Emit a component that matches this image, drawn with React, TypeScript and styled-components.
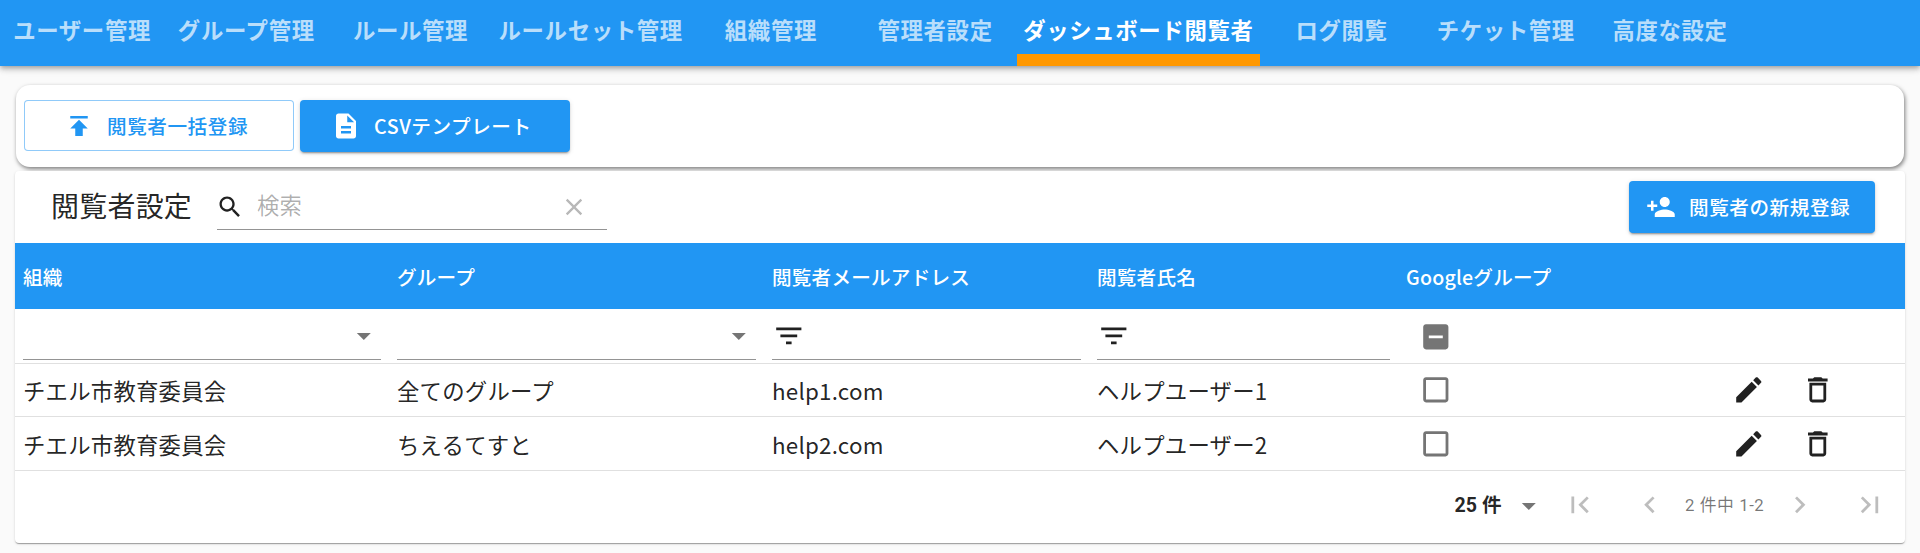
import React from "react";
import styled, { createGlobalStyle } from "styled-components";

const Global = createGlobalStyle`
  html, body { margin: 0; padding: 0; background: #fafafa; }
  body { font-family: "Noto Sans CJK JP", "Noto Sans", sans-serif; color: rgba(0,0,0,.87); width: 1920px; height: 553px; overflow: hidden; }
`;

const AppBar = styled.header`
  height: 66px; background: #2196f3; display: flex; align-items: stretch;
  box-shadow: 0 2px 4px -1px rgba(0,0,0,.2), 0 4px 5px 0 rgba(0,0,0,.14), 0 1px 10px 0 rgba(0,0,0,.12);
`;
const Tab = styled.div<{ $active?: boolean }>`
  min-width: 164.2px; height: 66px; box-sizing: border-box; flex: none; padding: 12px 6px 0;
  text-align: center; font-size: 22.4px; line-height: 34px; font-weight: 700; letter-spacing: .64px; white-space: nowrap;
  color: ${p => (p.$active ? "#fff" : "rgba(255,255,255,.7)")};
  border-bottom: 12px solid ${p => (p.$active ? "#ff9800" : "transparent")};
`;
const Main = styled.main`
  padding: 19px 15px 0;
`;
const ActionCard = styled.section`
  height: 82px; margin: 0 1px; box-sizing: border-box; background: #fff; border-radius: 14px; padding: 15px 8px;
  display: flex; gap: 6px; align-items: flex-start;
  box-shadow: 1px 2px 4px 0 rgba(0,0,0,.5);
`;
const Btn = styled.button<{ $outlined?: boolean }>`
  width: 270px; height: ${p => (p.$outlined ? 51 : 52)}px; box-sizing: border-box; border-radius: 4px;
  font: 500 19.6px/1 "Noto Sans CJK JP", sans-serif; letter-spacing: .56px; display: flex; align-items: center; gap: 13px;
  padding: 0 0 0 ${p => (p.$outlined ? 39 : 31)}px;
  color: ${p => (p.$outlined ? "#2196f3" : "#fff")};
  background: ${p => (p.$outlined ? "#fff" : "#2196f3")};
  border: ${p => (p.$outlined ? "1px solid rgba(33,150,243,.5)" : "none")};
  box-shadow: ${p => (p.$outlined ? "none" : "0 3px 1px -2px rgba(0,0,0,.2), 0 2px 2px 0 rgba(0,0,0,.14), 0 1px 5px 0 rgba(0,0,0,.12)")};
`;
const TableCard = styled.section`
  margin-top: 4px; height: 372px; background: #fff; border-radius: 4px; overflow: hidden;
  box-shadow: 0 2px 1px -1px rgba(0,0,0,.2), 0 1px 1px 0 rgba(0,0,0,.14), 0 1px 3px 0 rgba(0,0,0,.12);
`;
const Toolbar = styled.div`
  height: 72px; display: flex; align-items: flex-start; padding-left: 36px; padding-right: 30px;
`;
const Title = styled.h2`
  margin: 13px 25px 0 0; font-size: 28px; line-height: 42px; font-weight: 400; letter-spacing: .21px; white-space: nowrap;
`;
const Search = styled.div`
  width: 390px; height: 59px; box-sizing: border-box; border-bottom: 1px solid #949494; display: flex; align-items: flex-start;
  color: rgba(0,0,0,.32); font-size: 22.4px; flex: none;
`;
const SearchIcon = styled.span`
  margin: 22px 0 0 -1px;
`;
const SearchText = styled.span`
  flex: 1; margin: 17px 0 0 13px; line-height: 33px;
`;
const ClearIcon = styled.span`
  margin: 22px 19px 0 0; color: rgba(0,0,0,.28);
`;
const AddBtn = styled.button`
  margin: 10px 0 0 auto; width: 246px; height: 52px; border: none; border-radius: 4px; background: #2196f3; color: #fff;
  font: 500 19.6px/1 "Noto Sans CJK JP", sans-serif; letter-spacing: .56px; display: flex; align-items: center; gap: 13px; padding: 0 0 0 17px;
  box-shadow: 0 3px 1px -2px rgba(0,0,0,.2), 0 2px 2px 0 rgba(0,0,0,.14), 0 1px 5px 0 rgba(0,0,0,.12);
`;
const Table = styled.table`
  width: 100%; table-layout: fixed; border-collapse: separate; border-spacing: 0;
`;
const Th = styled.th`
  height: 66px; padding: 1px 8px 0; background: #2196f3; color: #fff; text-align: left; font-size: 19.6px; font-weight: 500; letter-spacing: .21px; white-space: nowrap; box-sizing: border-box;
`;
const FilterCell = styled.td`
  height: 55px; box-sizing: border-box; padding: 0 8px; border-bottom: 1px solid #e0e0e0; vertical-align: top;
`;
const FilterBox = styled.div`
  height: 51px; box-sizing: border-box; border-bottom: 1px solid #949494; display: flex; justify-content: flex-end; padding-top: 10px;
`;
const FilterIconBox = styled(FilterBox)`
  justify-content: flex-start;
`;
const CheckFilterCell = styled(FilterCell)`
  padding: 11px 0 0 21px;
`;
const Td = styled.td`
  height: 53px; box-sizing: border-box; padding: 0 8px; border-bottom: 1px solid #e0e0e0; font-size: 22.4px; letter-spacing: .21px; white-space: nowrap;
  tr:last-child > & { height: 54px; }
`;
const CheckCell = styled(Td)`
  padding-left: 21px;
`;
const Actions = styled.div`
  display: flex; gap: 35.4px;
`;
const Footer = styled.div`
  height: 72px; display: flex; align-items: flex-start; justify-content: flex-end; padding-top: 17px; box-sizing: border-box; color: rgba(0,0,0,.26);
`;
const PerPage = styled.span`
  font: 700 19.6px/34px Roboto, "Noto Sans CJK JP", sans-serif; color: rgba(0,0,0,.87); margin-right: 10px; padding-top: 1px;
`;
const SelectArrow = styled.span`
  margin-top: 1px;
`;
const PageInfo = styled.span`
  font: 400 16.8px/34px Roboto, "Noto Sans CJK JP", sans-serif; letter-spacing: .56px; color: rgba(0,0,0,.54); width: 80px; white-space: nowrap;
`;
const PageBtn = styled.span`
  display: flex; padding: 0 18.2px;
`;
const Ico = styled.svg<{ $s?: number; $c?: string }>`
  width: ${p => p.$s ?? 33.6}px; height: ${p => p.$s ?? 33.6}px; fill: ${p => p.$c ?? "currentColor"}; flex: none; display: block;
`;

const I = ({ d, s, c }: { d: string; s?: number; c?: string }) => (
  <Ico viewBox="0 0 24 24" $s={s} $c={c}><path d={d} /></Ico>
);
const P = {
  publish: "M5 4v2h14V4H5zm0 10h4v6h6v-6h4l-7-7-7 7z",
  doc: "M14 2H6c-1.1 0-1.99.9-1.99 2L4 20c0 1.1.89 2 1.99 2H18c1.1 0 2-.9 2-2V8l-6-6zm2 16H8v-2h8v2zm0-4H8v-2h8v2zm-3-5V3.5L18.5 9H13z",
  search: "M15.5 14h-.79l-.28-.27C15.41 12.59 16 11.11 16 9.5 16 5.91 13.09 3 9.5 3S3 5.91 3 9.5 5.91 16 9.5 16c1.61 0 3.09-.59 4.23-1.57l.27.28v.79l5 4.99L20.49 19l-4.99-5zm-6 0C7.01 14 5 11.99 5 9.5S7.01 5 9.5 5 14 7.01 14 9.5 11.99 14 9.5 14z",
  clear: "M19 6.41L17.59 5 12 10.59 6.41 5 5 6.41 10.59 12 5 17.59 6.41 19 12 13.41 17.59 19 19 17.59 13.41 12z",
  add: "M15 12c2.21 0 4-1.79 4-4s-1.79-4-4-4-4 1.79-4 4 1.79 4 4 4zm-9-2V7H4v3H1v2h3v3h2v-3h3v-2H6zm9 4c-2.67 0-8 1.34-8 4v2h16v-2c0-2.66-5.33-4-8-4z",
  arrow: "M7 10l5 5 5-5z",
  filter: "M10 18h4v-2h-4v2zM3 6v2h18V6H3zm3 7h12v-2H6v2z",
  indet: "M19 3H5c-1.1 0-2 .9-2 2v14c0 1.1.9 2 2 2h14c1.1 0 2-.9 2-2V5c0-1.1-.9-2-2-2zm-2 10H7v-2h10v2z",
  box: "M19 5v14H5V5h14m0-2H5c-1.1 0-2 .9-2 2v14c0 1.1.9 2 2 2h14c1.1 0 2-.9 2-2V5c0-1.1-.9-2-2-2z",
  edit: "M3 17.25V21h3.75L17.81 9.94l-3.75-3.75L3 17.25zM20.71 7.04c.39-.39.39-1.02 0-1.41l-2.34-2.34c-.39-.39-1.02-.39-1.41 0l-1.83 1.83 3.75 3.75 1.83-1.83z",
  trash: "M6 19c0 1.1.9 2 2 2h8c1.1 0 2-.9 2-2V7H6v12zM8 9h8v10H8V9zm7.5-5l-1-1h-5l-1 1H5v2h14V4z",
  first: "M18.41 16.59L13.82 12l4.59-4.59L17 6l-6 6 6 6zM6 6h2v12H6z",
  prev: "M15.41 7.41L14 6l-6 6 6 6 1.41-1.41L10.83 12z",
  next: "M10 6L8.59 7.41 13.17 12l-4.58 4.59L10 18l6-6z",
  last: "M5.59 7.41L10.18 12l-4.59 4.59L7 18l6-6-6-6zM16 6h2v12h-2z",
};

const tabs = ["ユーザー管理", "グループ管理", "ルール管理", "ルールセット管理", "組織管理", "管理者設定", "ダッシュボード閲覧者", "ログ閲覧", "チケット管理", "高度な設定"];
const rows = [
  ["チエル市教育委員会", "全てのグループ", "help1.com", "ヘルプユーザー1"],
  ["チエル市教育委員会", "ちえるてすと", "help2.com", "ヘルプユーザー2"],
];

export default function App() {
  return (
    <>
      <Global />
      <AppBar>
        {tabs.map(t => <Tab key={t} $active={t === "ダッシュボード閲覧者"}>{t}</Tab>)}
      </AppBar>
      <Main>
        <ActionCard>
          <Btn $outlined><I d={P.publish} s={30} />閲覧者一括登録</Btn>
          <Btn><I d={P.doc} s={30} />CSVテンプレート</Btn>
        </ActionCard>
        <TableCard>
          <Toolbar>
            <Title>閲覧者設定</Title>
            <Search>
              <SearchIcon><I d={P.search} c="rgba(0,0,0,.87)" s={28} /></SearchIcon>
              <SearchText>検索</SearchText>
              <ClearIcon><I d={P.clear} s={28} /></ClearIcon>
            </Search>
            <AddBtn><I d={P.add} s={30} />閲覧者の新規登録</AddBtn>
          </Toolbar>
          <Table>
            <colgroup>
              <col width={374} /><col width={375} /><col width={325} /><col width={309} /><col width={326} /><col />
            </colgroup>
            <thead>
              <tr><Th>組織</Th><Th>グループ</Th><Th>閲覧者メールアドレス</Th><Th>閲覧者氏名</Th><Th>Googleグループ</Th><Th /></tr>
              <tr>
                <FilterCell><FilterBox><I d={P.arrow} c="#757575" /></FilterBox></FilterCell>
                <FilterCell><FilterBox><I d={P.arrow} c="#757575" /></FilterBox></FilterCell>
                <FilterCell><FilterIconBox><I d={P.filter} /></FilterIconBox></FilterCell>
                <FilterCell><FilterIconBox><I d={P.filter} /></FilterIconBox></FilterCell>
                <CheckFilterCell><I d={P.indet} c="#757575" /></CheckFilterCell>
                <FilterCell />
              </tr>
            </thead>
            <tbody>
              {rows.map(r => (
                <tr key={r[2]}>
                  {r.map((c, i) => <Td key={i}>{c}</Td>)}
                  <CheckCell><I d={P.box} c="#757575" /></CheckCell>
                  <Td>
                    <Actions>
                      <I d={P.edit} />
                      <I d={P.trash} />
                    </Actions>
                  </Td>
                </tr>
              ))}
            </tbody>
          </Table>
          <Footer>
            <PerPage>25 件</PerPage>
            <SelectArrow><I d={P.arrow} c="#757575" /></SelectArrow>
            <PageBtn><I d={P.first} /></PageBtn>
            <PageBtn><I d={P.prev} /></PageBtn>
            <PageInfo>2 件中 1-2</PageInfo>
            <PageBtn><I d={P.next} /></PageBtn>
            <PageBtn><I d={P.last} /></PageBtn>
          </Footer>
        </TableCard>
      </Main>
    </>
  );
}
